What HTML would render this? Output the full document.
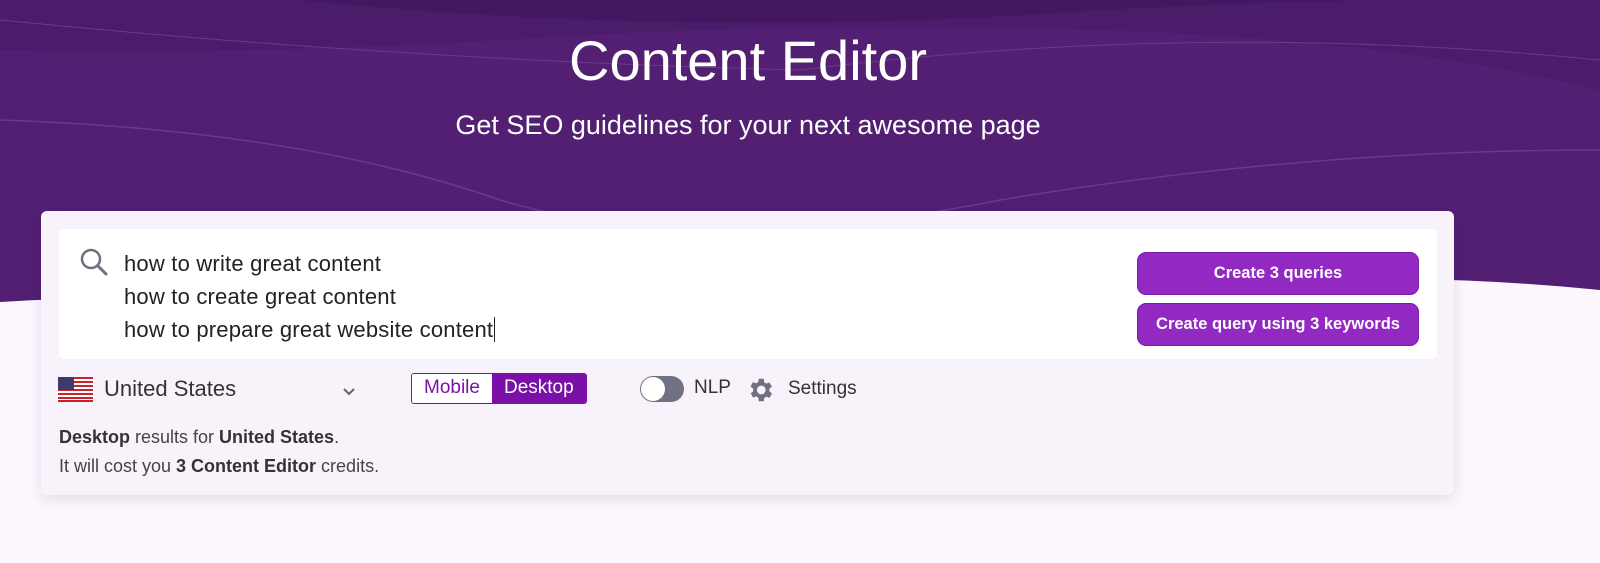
<!DOCTYPE html>
<html><head><style>
*{margin:0;padding:0;box-sizing:border-box}
body{width:1600px;height:563px;overflow:hidden;background:#fbf7fd;font-family:"Liberation Sans",sans-serif;position:relative}
.bg{position:absolute;left:0;top:0}
h1{position:absolute;top:28px;width:1496px;text-align:center;color:#fff;font-weight:400;font-size:56px;letter-spacing:0px}
h2{position:absolute;top:110px;width:1496px;text-align:center;color:#fff;font-weight:400;font-size:27px}
.card{position:absolute;left:41px;top:211px;width:1413px;height:284px;background:#f8f3fb;border-radius:6px;box-shadow:0 4px 14px rgba(60,20,90,.12)}
.inner{position:absolute;left:18px;top:18px;width:1378px;height:130px;background:#fff;border-radius:5px}
.q{position:absolute;left:65px;top:18px;font-size:22px;line-height:33px;color:#222;letter-spacing:.2px}
.btn{position:absolute;left:1078px;width:282px;height:43px;background:#9129c2;border:1px solid #7a1aa8;border-radius:9px;color:#fff;font-weight:bold;font-size:16.5px;text-align:center;line-height:41px}
.t{position:absolute;font-size:22px;color:#333}
.tog{position:absolute;left:370px;top:162px;height:31px;border:1.5px solid #7a10a8;border-radius:3px;display:flex;font-size:19px;overflow:hidden}
.tog span{padding:0 12px;line-height:28px}
.info{position:absolute;left:18px;top:212px;font-size:18px;line-height:29px;color:#444}
b{color:#333}
</style></head><body>
<svg class="bg" width="1600" height="563" viewBox="0 0 1600 563">
<path d="M0 0H1600V290Q1400 270 1200 285Q1000 290 800 290Q400 290 200 295Q80 297 0 302Z" fill="#521f72"/>
<path d="M0 0H1600V90Q1400 40 1100 30Q800 20 500 40Q250 55 0 50Z" fill="#4a1c69"/>
<path d="M300 0Q700 40 1100 10Q1300 0 1400 0Z" fill="#431860"/>
<path d="M0 120Q300 130 500 200Q700 260 1000 200Q1300 150 1600 150" stroke="#6a3a8c" fill="none" stroke-width="1.5"/>
<path d="M0 20Q400 60 800 70Q1200 20 1600 60" stroke="#6a3a8c" fill="none" stroke-width="1"/>
</svg>
<h1>Content Editor</h1>
<h2>Get SEO guidelines for your next awesome page</h2>
<div class="card">
 <div class="inner">
  <svg style="position:absolute;left:20px;top:18px" width="30" height="30" viewBox="0 0 30 30"><circle cx="12" cy="12" r="9" fill="none" stroke="#6f6f80" stroke-width="2.5"/><path d="M19 19L27 27" stroke="#6f6f80" stroke-width="3" stroke-linecap="round"/></svg>
  <div class="q">how to write great content<br>how to create great content<br>how to prepare great website content<span style="border-left:1.5px solid #222;margin-left:1px"></span></div>
  <div class="btn" style="top:23px">Create 3 queries</div>
  <div class="btn" style="top:74px">Create query using 3 keywords</div>
 </div>
 <svg style="position:absolute;left:17px;top:166px" width="35" height="25" viewBox="0 0 35 25"><rect width="35" height="25" fill="#fff"/><g fill="#c8232c"><rect y="0" width="35" height="2"/><rect y="4" width="35" height="2"/><rect y="8" width="35" height="2"/><rect y="12" width="35" height="2"/><rect y="16" width="35" height="2"/><rect y="20" width="35" height="2"/><rect y="23" width="35" height="2"/></g><rect width="16" height="13" fill="#3c3b6e"/></svg>
 <div class="t" style="left:63px;top:165px">United States</div>
 <svg style="position:absolute;left:301px;top:176px" width="14" height="10"><path d="M2 2L7 7L12 2" stroke="#666" stroke-width="2" fill="none"/></svg>
 <div class="tog"><span style="color:#7a10a8;background:#fff">Mobile</span><span style="background:#7a10a8;color:#fff">Desktop</span></div>
 <div style="position:absolute;left:599px;top:165px;width:44px;height:26px;border-radius:13px;background:#707284"><div style="position:absolute;left:1px;top:1px;width:24px;height:24px;border-radius:50%;background:#fff"></div></div>
 <div class="t" style="left:653px;top:166px;font-size:19px">NLP</div>
 <svg style="position:absolute;left:704px;top:164px" width="30" height="30" viewBox="0 0 24 24"><path fill="#6f6f80" d="M19.4 13a7.5 7.5 0 000-2l2.1-1.6-2-3.5-2.5 1a7.6 7.6 0 00-1.7-1L15 3h-4l-.4 2.7a7.6 7.6 0 00-1.7 1l-2.5-1-2 3.5L6.6 11a7.5 7.5 0 000 2l-2.1 1.6 2 3.5 2.5-1a7.6 7.6 0 001.7 1L11 21h4l.4-2.7a7.6 7.6 0 001.7-1l2.5 1 2-3.5zM13 15.5A3.5 3.5 0 1113 8.5a3.5 3.5 0 010 7z"/></svg>
 <div class="t" style="left:747px;top:167px;font-size:19px">Settings</div>
 <div class="info"><b>Desktop</b> results for <b>United States</b>.<br>It will cost you <b>3 Content Editor</b> credits.</div>
</div>
</body></html>
